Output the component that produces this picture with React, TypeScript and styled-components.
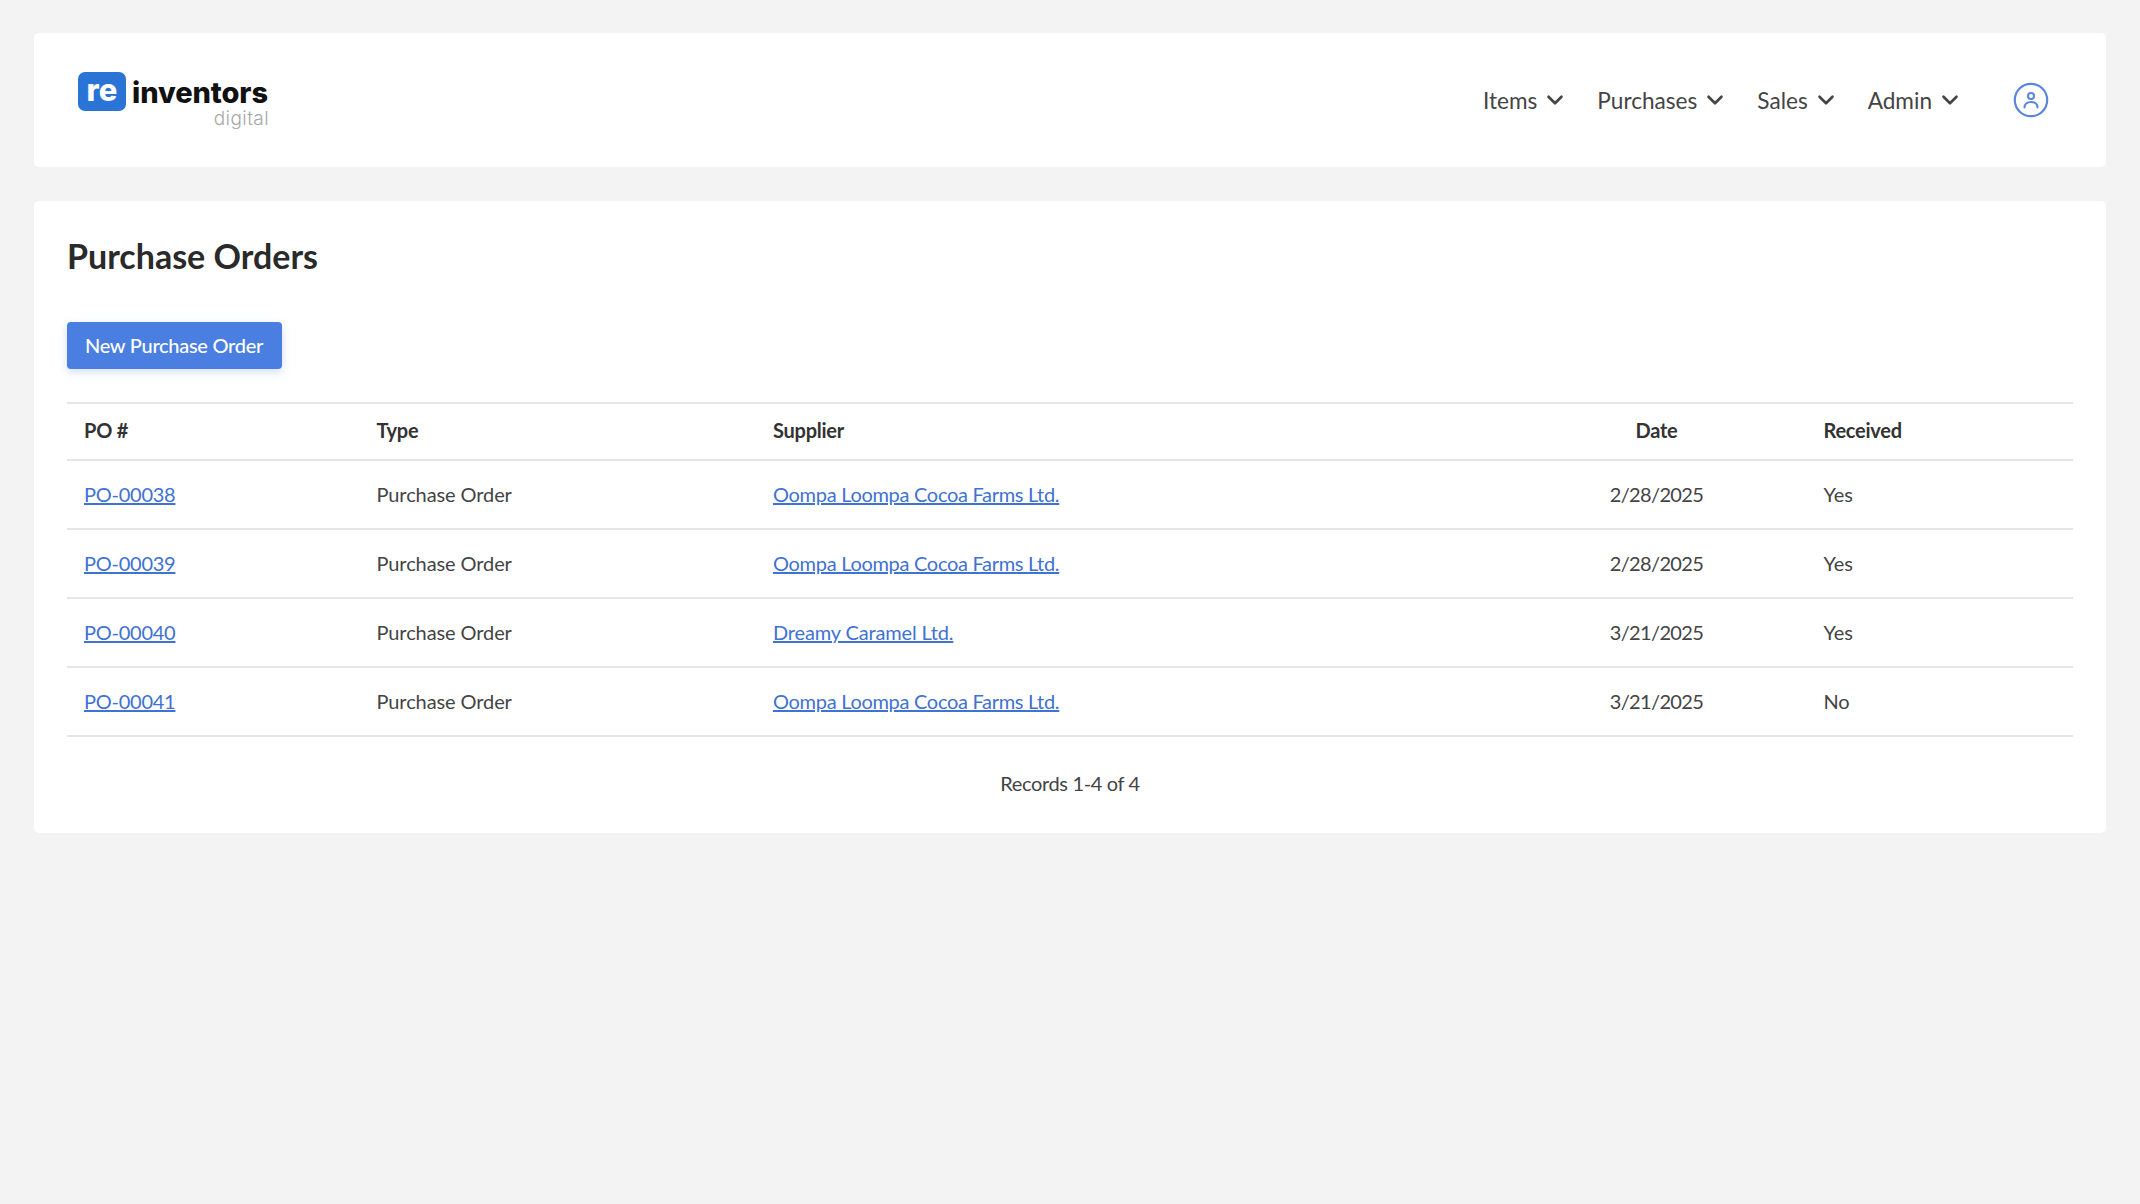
import React from "react";
import styled, { createGlobalStyle } from "styled-components";
import { ChevronDown } from "lucide-react";

const Global = createGlobalStyle`
  html, body { margin: 0; padding: 0; background: #f3f3f3; }
  body { font-family: Lato, "Liberation Sans", sans-serif; color: #444; }
`;

const Page = styled.div`
  min-height: 1204px;
  box-sizing: border-box;
  padding: 33px 34px;
  display: flex;
  flex-direction: column;
  gap: 34px;
`;

const Card = styled.section`
  background: #fff;
  border-radius: 5px;
`;

const Header = styled(Card)`
  height: 134px;
  display: flex;
  align-items: center;
  justify-content: space-between;
  padding: 0 57px 0 44px;
`;

const Logo = styled.div`
  display: grid;
  grid-template-columns: auto auto;
  column-gap: 4px;
  width: 192px;
  margin-top: 0;
`;

const LogoMark = styled.div`
  width: 48px;
  height: 39px;
  background: #2a74d6;
  border-radius: 7px;
  color: #fff;
  font: 800 31px/36px Inter, sans-serif;
  text-align: center;
`;

const LogoName = styled.div`
  font: 800 29px/41px Inter, sans-serif;
  letter-spacing: -0.1px;
  color: #111;
`;

const LogoSub = styled.div`
  grid-column: 2;
  text-align: right;
  font: 300 19px/18px Inter, sans-serif;
  letter-spacing: 0.4px;
  color: #a8a8a8;
  margin-top: -3px;
  padding-right: 1px;
`;

const Nav = styled.nav`
  display: flex;
  align-items: center;
`;

const NavItem = styled.a`
  display: flex;
  align-items: center;
  gap: 5px;
  font-size: 22.6px;
  color: #444;
  margin-right: 29px;
`;

const UserButton = styled.div`
  display: flex;
  margin-left: 21px;
  color: #5b86dc;
`;

const Content = styled(Card)`
  padding: 33px 33px 36px;
`;

const Title = styled.h1`
  margin: 0;
  font-size: 34px;
  line-height: 43px;
  font-weight: 700;
  color: #2a2a2a;
`;

const PrimaryButton = styled.button`
  display: block;
  margin-top: 45px;
  width: 215px;
  height: 47px;
  padding: 0 1px 2px 0;
  border: 0;
  border-radius: 4px;
  background: #4a7ee0;
  color: #fff;
  font: 500 20px Lato, sans-serif;
  letter-spacing: -0.28px;
  box-shadow: 0 3px 8px rgba(74, 126, 224, 0.25);
`;

const Table = styled.table`
  width: 100%;
  margin-top: 33px;
  border-collapse: collapse;
  table-layout: fixed;
  font-size: 20px;
  letter-spacing: -0.1px;
`;

const Row = styled.tr`
  height: 69px;
  border-bottom: 2px solid #e6e6e6;
`;

const HeadRow = styled(Row)`
  height: 57px;
  border-top: 2px solid #e6e6e6;
`;

const Th = styled.th<{ $w: number; $center?: boolean }>`
  box-sizing: border-box;
  width: ${(p) => p.$w}px;
  padding: 0 17px 3px;
  font-weight: 700;
  color: #333;
  letter-spacing: -0.25px;
  text-align: ${(p) => (p.$center ? "center" : "left")};
`;

const Td = styled.td`
  padding: 0 17px 2px;
`;

const DateCell = styled(Td)`
  text-align: center;
  letter-spacing: -0.65px;
`;

const Link = styled.a<{ $spacing: number }>`
  color: #3f72d2;
  text-decoration: underline;
  letter-spacing: ${(p) => p.$spacing}px;
`;

const Records = styled.div`
  margin-top: 33px;
  text-align: center;
  font-size: 20px;
  line-height: 27px;
  letter-spacing: -0.35px;
`;

const UserIcon = () => (
  <svg width="36" height="36" viewBox="0 0 36 36" fill="none" stroke="currentColor" strokeLinecap="round">
    <circle cx="18" cy="18" r="16.2" strokeWidth="2.2" />
    <circle cx="18" cy="14" r="3" strokeWidth="2" />
    <path d="M11.5 25.5c0-3.6 2.9-5.5 6.5-5.5s6.5 1.9 6.5 5.5" strokeWidth="2" />
  </svg>
);

const nav = ["Items", "Purchases", "Sales", "Admin"];
const rows = [
  { po: "PO-00038", supplier: "Oompa Loompa Cocoa Farms Ltd.", date: "2/28/2025", received: "Yes", spacing: -0.3 },
  { po: "PO-00039", supplier: "Oompa Loompa Cocoa Farms Ltd.", date: "2/28/2025", received: "Yes", spacing: -0.3 },
  { po: "PO-00040", supplier: "Dreamy Caramel Ltd.", date: "3/21/2025", received: "Yes", spacing: -0.15 },
  { po: "PO-00041", supplier: "Oompa Loompa Cocoa Farms Ltd.", date: "3/21/2025", received: "No", spacing: -0.3 },
];

export default function App() {
  return (
    <>
      <Global />
      <Page>
        <Header>
          <Logo>
            <LogoMark>re</LogoMark>
            <LogoName>inventors</LogoName>
            <LogoSub>digital</LogoSub>
          </Logo>
          <Nav>
            {nav.map((n) => (
              <NavItem key={n}>
                {n}
                <ChevronDown size={26} strokeWidth={2.4} />
              </NavItem>
            ))}
            <UserButton>
              <UserIcon />
            </UserButton>
          </Nav>
        </Header>
        <Content>
          <Title>Purchase Orders</Title>
          <PrimaryButton>New Purchase Order</PrimaryButton>
          <Table>
            <thead>
              <HeadRow>
                <Th $w={292.5}>PO #</Th>
                <Th $w={396.5}>Type</Th>
                <Th $w={750.5}>Supplier</Th>
                <Th $w={300} $center>Date</Th>
                <Th $w={266.5}>Received</Th>
              </HeadRow>
            </thead>
            <tbody>
              {rows.map((r) => (
                <Row key={r.po}>
                  <Td><Link $spacing={-0.25}>{r.po}</Link></Td>
                  <Td>Purchase Order</Td>
                  <Td><Link $spacing={r.spacing}>{r.supplier}</Link></Td>
                  <DateCell>{r.date}</DateCell>
                  <Td>{r.received}</Td>
                </Row>
              ))}
            </tbody>
          </Table>
          <Records>Records 1-4 of 4</Records>
        </Content>
      </Page>
    </>
  );
}
